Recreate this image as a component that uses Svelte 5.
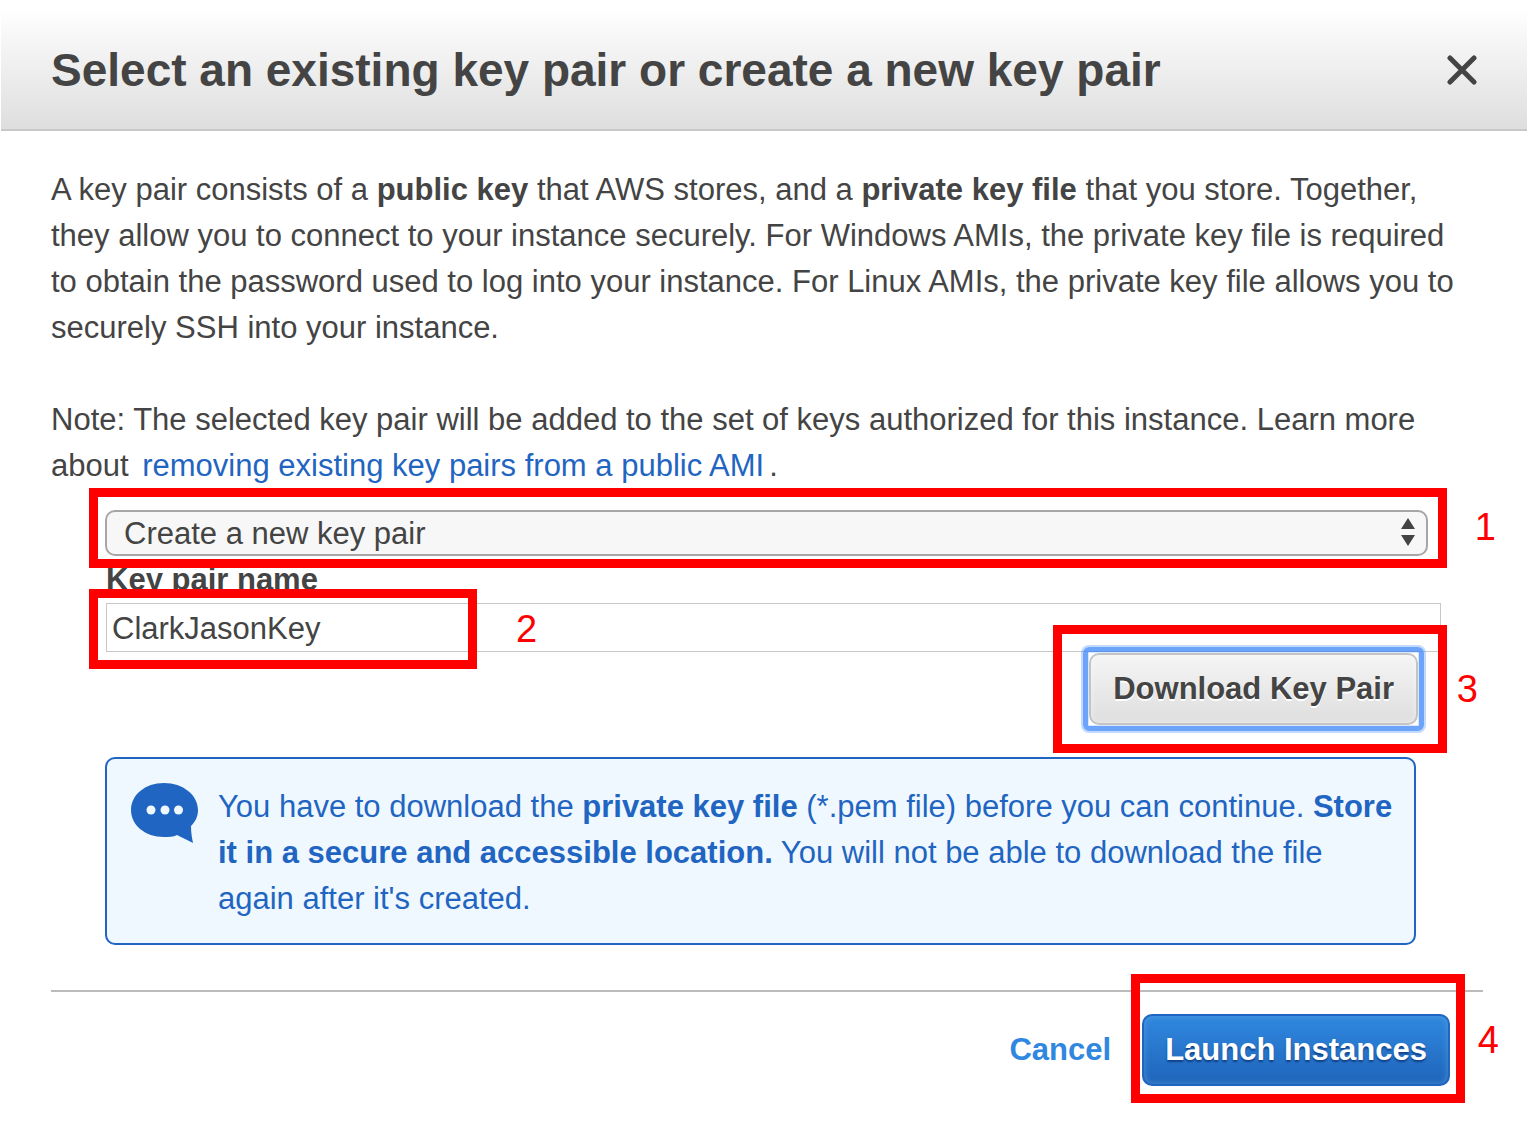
<script>
  let choice = $state('new');
  let keyName = $state('ClarkJasonKey');
</script>

<main class="dialog" role="dialog" aria-labelledby="dialog-title">
  <header class="titlebar">
    <h1 id="dialog-title">Select an existing key pair or create a new key pair</h1>
    <button class="close" type="button" aria-label="Close">
      <svg viewBox="0 0 30 30" width="30" height="30" aria-hidden="true">
        <path d="M3 3L27 27M27 3L3 27" fill="none" stroke="#444" stroke-width="5" stroke-linecap="round" />
      </svg>
    </button>
  </header>

  <div class="content">
    <p>
      A key pair consists of a <strong>public key</strong> that AWS stores, and a
      <strong>private key file</strong> that you store. Together, they allow you to connect to your
      instance securely. For Windows AMIs, the private key file is required to obtain the password
      used to log into your instance. For Linux AMIs, the private key file allows you to securely
      SSH into your instance.
    </p>
    <p>
      Note: The selected key pair will be added to the set of keys authorized for this instance.
      Learn more about <a class="doc-link" href="#removing">removing existing key pairs from a public AMI</a>.
    </p>

    <form class="form">
      <div class="marked select-row">
        <select aria-label="Key pair option" bind:value={choice}>
          <option value="existing">Choose an existing key pair</option>
          <option value="new">Create a new key pair</option>
          <option value="none">Proceed without a key pair</option>
        </select>
        <svg class="arrows" viewBox="0 0 14 28" width="14" height="28" aria-hidden="true">
          <path d="M7 0L14 11H0ZM0 17H14L7 28Z" fill="#444" />
        </svg>
        <span class="frame frame-select"></span>
        <span class="step step-select">1</span>
      </div>

      <label for="key-name">Key pair name</label>
      <div class="marked name-row">
        <input id="key-name" type="text" bind:value={keyName} />
        <span class="frame frame-name"></span>
        <span class="step step-name">2</span>
      </div>

      <div class="download-row">
        <div class="marked">
          <button class="btn download" type="button">Download Key Pair</button>
          <span class="frame frame-download"></span>
          <span class="step step-download">3</span>
        </div>
      </div>

      <div class="info">
        <svg viewBox="0 0 67 61" width="67" height="61" aria-hidden="true">
          <path
            d="M33 0C52 0 67 12 67 27C67 34 64 39 60 43C60 50 61 55 62 60C57 57 51 55 46 52C42 54 38 54 33 54C14 54 0 42 0 27C0 12 14 0 33 0Z"
            fill="#1f65c1"
          />
          <circle cx="20" cy="27" r="4.5" fill="#f0f8ff" />
          <circle cx="34" cy="27" r="4.5" fill="#f0f8ff" />
          <circle cx="47.5" cy="27" r="4.5" fill="#f0f8ff" />
        </svg>
        <p>
          You have to download the <strong>private key file</strong> (*.pem file) before you can
          continue. <strong>Store it in a secure and accessible location.</strong> You will not be
          able to download the file again after it's created.
        </p>
      </div>
    </form>

    <footer>
      <a class="cancel" href="#cancel">Cancel</a>
      <div class="marked">
        <button class="btn launch" type="button">Launch Instances</button>
        <span class="frame frame-launch"></span>
        <span class="step step-launch">4</span>
      </div>
    </footer>
  </div>
</main>

<style>
  :global(body) {
    margin: 0;
    background: #fff;
  }

  .dialog,
  select,
  input,
  button {
    font-family: 'Liberation Sans', Arial, sans-serif;
    font-size: 31px;
    line-height: 46px;
    color: #444;
  }

  .dialog {
    overflow: hidden;
  }

  select,
  input,
  button {
    box-sizing: border-box;
    margin: 0;
  }

  .titlebar {
    box-sizing: border-box;
    height: 131px;
    margin-left: 1px;
    padding: 10px 50px 0 50px;
    display: flex;
    align-items: center;
    justify-content: space-between;
    background: linear-gradient(#fff 6%, #dedede);
    border-bottom: 2px solid #c8c8c8;
  }

  h1 {
    margin: 0;
    font-size: 46px;
    line-height: 56px;
    white-space: nowrap;
  }

  .close {
    display: flex;
    padding: 0;
    border: 0;
    background: none;
  }

  .content {
    padding: 36px 44px 39px 51px;
  }

  p {
    margin: 0 0 46px;
  }

  .content > p {
    padding-right: 12px;
  }

  .content > p:nth-of-type(2) {
    margin-bottom: 21px;
  }

  .doc-link {
    margin: 0 5px;
    color: #1f65c1;
    text-decoration: none;
  }

  .form {
    margin: 0 55px 0 54px;
  }

  .marked {
    position: relative;
  }

  .select-row {
    display: flex;
  }

  select {
    width: 100%;
    height: 46px;
    padding: 2px 40px 0 17px;
    appearance: none;
    border: 2px solid #a6a6a6;
    border-radius: 10px;
    background: #f7f7f7;
    line-height: 40px;
  }

  .arrows {
    position: absolute;
    right: 13px;
    top: 8px;
    pointer-events: none;
  }

  label {
    display: block;
    padding: 1px 0 0 1px;
    font-weight: bold;
  }

  .name-row {
    display: flex;
    margin: 0 -13px 0 1px;
  }

  input {
    width: 100%;
    height: 49px;
    padding: 2px 5px 0;
    border: 1px solid #c8c8c8;
    border-radius: 0;
    background: #fff;
  }

  .download-row {
    display: flex;
    justify-content: flex-end;
    padding: 1px 10px 32px 0;
  }

  .btn {
    display: block;
    height: 72px;
    padding: 0 22px;
    border-radius: 10px;
    font-weight: bold;
    white-space: nowrap;
  }

  .download {
    position: relative;
    border: 2px solid #c4c4c4;
    background: linear-gradient(#f5f5f5, #dedede);
    text-shadow: 0 2px 0 #fff;
    box-shadow: inset 0 0 6px rgb(255 255 255 / 50%);
  }

  .download::after {
    content: '';
    position: absolute;
    inset: -8px;
    border: 5px solid rgb(59 134 250 / 75%);
    border-radius: 6px;
    box-shadow:
      0 0 0 2px rgb(59 134 250 / 30%),
      inset 0 0 0 1px rgb(59 134 250 / 20%);
  }

  .info {
    display: flex;
    gap: 20px;
    margin-right: 12px;
    padding: 24px 20px 21px 24px;
    border: 2px solid #1f65c1;
    border-radius: 10px;
    background: #f0f8ff;
    color: #1f65c1;
  }

  .info svg {
    flex: none;
  }

  .info p {
    margin: 1px 0 0;
  }

  footer {
    display: flex;
    justify-content: flex-end;
    align-items: center;
    gap: 31px;
    margin-top: 45px;
    padding: 22px 33px 0 0;
    border-top: 2px solid #bbb;
  }

  .cancel {
    color: #2f87e0;
    font-weight: bold;
    text-decoration: none;
  }

  .launch {
    padding: 0 21px;
    border: 2px solid #1f65c1;
    background: linear-gradient(#3088df, #1f65bb);
    box-shadow: inset 0 0 6px rgb(100 170 220 / 60%);
    color: #fff;
    text-shadow: 0 2px 2px rgb(0 30 90 / 60%);
  }

  .frame {
    position: absolute;
    box-sizing: border-box;
    border: 9px solid #f00;
    pointer-events: none;
  }

  .frame-select {
    inset: -22px -19px -12px -16px;
  }

  .frame-name {
    top: -14px;
    bottom: -17px;
    left: -17px;
    width: 388px;
  }

  .frame-download {
    inset: -28px -29px -28px -36px;
  }

  .frame-launch {
    inset: -40px -15px -17px -11px;
  }

  .step {
    position: absolute;
    color: #f00;
    font-size: 38px;
    line-height: 44px;
  }

  .step-select {
    right: -68px;
    top: -5px;
  }

  .step-name {
    left: 410px;
    top: 4px;
  }

  .step-download {
    right: -60px;
    top: 14px;
  }

  .step-launch {
    right: -49px;
    top: 4px;
  }
</style>
